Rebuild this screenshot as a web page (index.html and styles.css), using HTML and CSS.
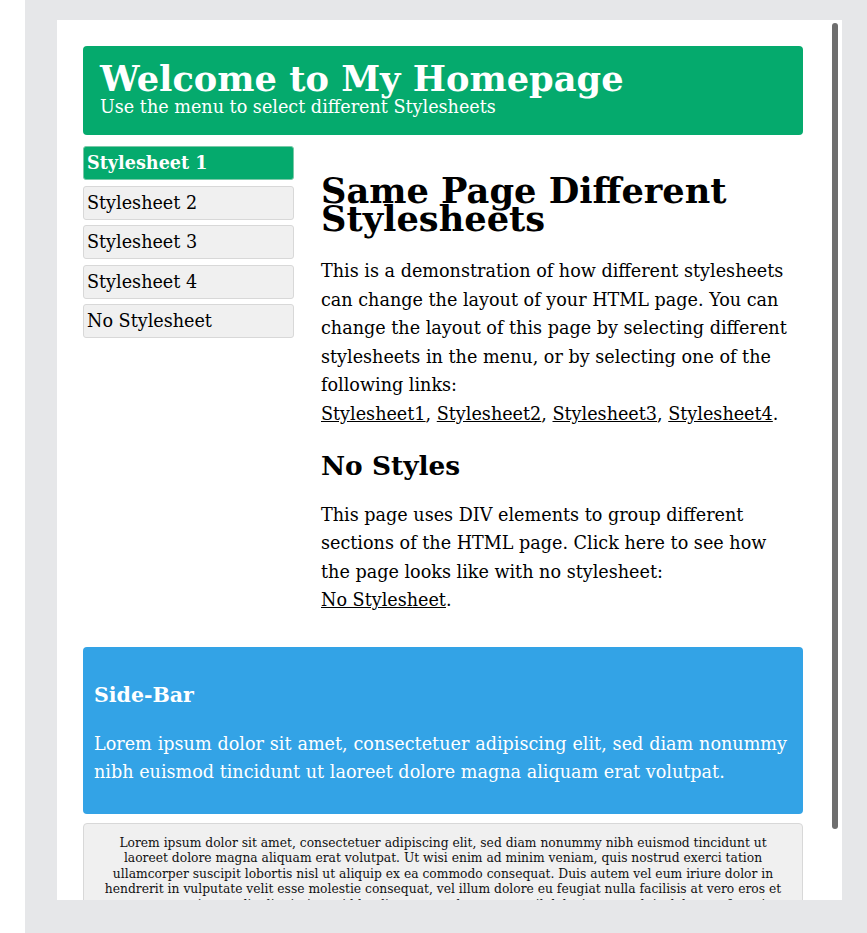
FILE: index.html
```html
<!DOCTYPE html>
<html>
<head>
<meta charset="utf-8">
<link rel="stylesheet" href="styles.css">
</head>
<body>
<div class="frame">
  <div class="viewport">
    <div class="page">
      <div class="header">
        <h1>Welcome to My Homepage</h1>
        <p>Use the menu to select different Stylesheets</p>
      </div>
      <div class="layout">
        <div class="menu">
          <a class="item active">Stylesheet 1</a>
          <a class="item">Stylesheet 2</a>
          <a class="item">Stylesheet 3</a>
          <a class="item">Stylesheet 4</a>
          <a class="item">No Stylesheet</a>
        </div>
        <div class="main">
          <h1>Same Page Different Stylesheets</h1>
          <p>This is a demonstration of how different stylesheets can change the layout of your HTML page. You can change the layout of this page by selecting different stylesheets in the menu, or by selecting one of the following links:<br><a href="#">Stylesheet1</a>, <a href="#">Stylesheet2</a>, <a href="#">Stylesheet3</a>, <a href="#">Stylesheet4</a>.</p>
          <h2>No Styles</h2>
          <p>This page uses DIV elements to group different sections of the HTML page. Click here to see how the page looks like with no stylesheet:<br><a href="#">No Stylesheet</a>.</p>
        </div>
      </div>
      <div class="sidebar">
        <h3>Side-Bar</h3>
        <p>Lorem ipsum dolor sit amet, consectetuer adipiscing elit, sed diam nonummy nibh euismod tincidunt ut laoreet dolore magna aliquam erat volutpat.</p>
      </div>
      <div class="footer">
        <p>Lorem ipsum dolor sit amet, consectetuer adipiscing elit, sed diam nonummy nibh euismod tincidunt ut laoreet dolore magna aliquam erat volutpat. Ut wisi enim ad minim veniam, quis nostrud exerci tation ullamcorper suscipit lobortis nisl ut aliquip ex ea commodo consequat. Duis autem vel eum iriure dolor in hendrerit in vulputate velit esse molestie consequat, vel illum dolore eu feugiat nulla facilisis at vero eros et accumsan et iusto odio dignissim qui blandit praesent luptatum zzril delenit augue duis dolore te feugait nulla facilisi.</p>
      </div>
    </div>
    <div class="scrollbar"></div>
  </div>
</div>
</body>
</html>
```

FILE: styles.css
```css
html, body {
  margin: 0;
  padding: 0;
  background: #ffffff;
}
body {
  font-family: "DejaVu Serif", serif;
  color: #000;
}
.frame {
  margin-left: 25px;
  height: 933px;
  box-sizing: border-box;
  background: #e6e7e9;
  padding: 20px 25px 0 32px;
}
.viewport {
  position: relative;
  width: 785px;
  height: 880px;
  background: #fff;
  overflow: hidden;
}
.scrollbar {
  position: absolute;
  left: 775px;
  top: 3px;
  width: 6px;
  height: 806px;
  border-radius: 3px;
  background: #6e6e6e;
}
.page {
  padding: 26px 39px 0 26px;
}
.header {
  background: #05aa6d;
  color: #fff;
  border-radius: 4px;
  padding: 14px 17px 19px;
  height: 89px;
  box-sizing: border-box;
}
.header h1 {
  margin: 0;
  font-size: 35.2px;
  line-height: 37px;
  font-weight: bold;
}
.header p {
  margin: 0;
  font-size: 17.6px;
  line-height: 20px;
}
.layout {
  display: flex;
  margin-top: 11px;
}
.menu {
  width: 211px;
  flex: none;
  display: flex;
  flex-direction: column;
  gap: 5.5px;
}
.item {
  display: block;
  box-sizing: border-box;
  height: 34px;
  line-height: 32px;
  padding: 0 3px;
  font-size: 17.6px;
  background: #f0f0f0;
  border: 1px solid #d8d8d8;
  border-radius: 3px;
  color: #000;
}
.item.active {
  background: #05aa6d;
  border-color: #7bc9a8;
  color: #fff;
  font-weight: bold;
}
.main {
  flex: 1;
  margin-left: 27px;
  padding-top: 31px;
  padding-right: 10px;
}
.main h1 {
  margin: 0 0 24px;
  font-size: 35.2px;
  line-height: 28px;
  font-weight: bold;
}
.main p {
  margin: 0;
  font-size: 17.6px;
  line-height: 28.6px;
}
.main a {
  color: #000;
  text-decoration: underline;
}
.main h2 {
  margin: 22px 0 20px;
  font-size: 26.4px;
  line-height: 30px;
  font-weight: bold;
}
.sidebar {
  margin-top: 32px;
  background: #33a3e6;
  color: #fff;
  border-radius: 4px;
  padding: 33px 16px 28px 11px;
}
.sidebar h3 {
  margin: 0 0 20px;
  font-size: 20.5px;
  line-height: 30px;
  font-weight: bold;
}
.sidebar p {
  margin: 0;
  font-size: 17.6px;
  line-height: 28px;
  text-align: justify;
}
.footer {
  margin-top: 9px;
  background: #f0f0f0;
  border: 1px solid #d8d8d8;
  border-radius: 4px;
  padding: 12px 20px 11px;
  text-align: center;
}
.footer p {
  margin: 0;
  font-size: 12.3px;
  line-height: 15.5px;
  color: #111;
}
```
